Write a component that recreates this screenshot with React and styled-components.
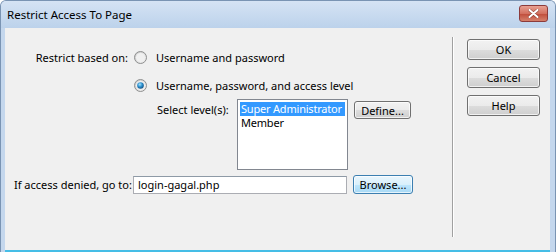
import React from 'react';
import styled, { createGlobalStyle } from 'styled-components';

const GlobalStyle = createGlobalStyle`
  html, body { margin: 0; padding: 0; background: #ffffff; }
  body { font-family: "Noto Sans", "Open Sans", sans-serif; font-size: 11px; color: #000; }
`;

const Window = styled.div`
  width: 556px;
  height: 252px;
  box-sizing: border-box;
  display: flex;
  flex-direction: column;
  background: #c4d7ed;
  border-radius: 6px 6px 0 0;
  border: 1px solid #7a94b3;
  border-bottom: none;
  overflow: hidden;
`;

const TitleBar = styled.div`
  height: 27px;
  flex: none;
  display: flex;
  align-items: center;
  justify-content: space-between;
  padding: 0 7px 0 6px;
  background: linear-gradient(#d5e3f4, #bcd2eb);
`;

const Title = styled.span`
  font-size: 11.5px;
  color: #000;
`;

const CloseButton = styled.div`
  width: 27px;
  height: 15px;
  margin-top: -3px;
  border: 1px solid #8c3b3b;
  border-radius: 3px;
  display: flex;
  align-items: center;
  justify-content: center;
  background: linear-gradient(#e8a193, #d3705f 50%, #c04c3a 51%, #d5806b);
`;

const Body = styled.div`
  flex: 1;
  display: flex;
  margin: 0 5px 0 4px;
  background: #f0f0f0;
  border-bottom: 2px solid #45bde6;
`;

const Main = styled.div`
  width: 447px;
  padding: 15px 0 0 9px;
  box-sizing: border-box;
  display: grid;
  grid-template-columns: 119px 1fr;
  grid-auto-rows: min-content;
`;

const Label = styled.div`
  text-align: right;
  padding-right: 5px;
  align-self: center;
  white-space: nowrap;
`;

const Option = styled.label`
  display: flex;
  align-items: center;
  gap: 9px;
  height: 28px;
  padding-left: 1px;
  white-space: nowrap;
`;

const LevelRow = styled.div`
  display: flex;
  align-items: flex-start;
  padding-left: 24px;
  height: 76px;
`;

const LevelLabel = styled.span`
  margin-top: 3px;
  width: 80px;
  white-space: nowrap;
`;

const ListBox = styled.div`
  width: 111px;
  height: 71px;
  box-sizing: border-box;
  border: 1px solid #828790;
  background: #fff;
  padding: 2px;
  white-space: nowrap;
  overflow: hidden;
  letter-spacing: -0.2px;
`;

const ListItem = styled.div`
  height: 14px;
  line-height: 14px;
  padding-left: 1px;
  background: ${p => (p.$selected ? '#3399ff' : 'transparent')};
  color: ${p => (p.$selected ? '#fff' : '#000')};
`;

const Button = styled.button`
  font: inherit;
  font-size: 11px;
  width: ${p => p.$w || 73}px;
  height: ${p => p.$h || 21}px;
  margin-top: ${p => p.$top || 0}px;
  margin-left: ${p => p.$left || 0}px;
  padding: 0;
  border: 1px solid ${p => (p.$focus ? '#3c7fb1' : '#707070')};
  border-radius: 3px;
  color: #000;
  background: ${p =>
    p.$focus
      ? 'linear-gradient(#eaf6fd, #d9f0fc 50%, #bee6fd 51%, #a7d9f5)'
      : 'linear-gradient(#f2f2f2, #ebebeb 50%, #dddddd 51%, #cfcfcf)'};
  box-shadow: inset 0 0 0 1px rgba(255, 255, 255, 0.7);
`;

const DeniedRow = styled.div`
  grid-column: 1 / 3;
  display: grid;
  grid-template-columns: 119px 214px auto;
  align-items: center;
`;

const DeniedLabel = styled.div`
  white-space: nowrap;
`;

const TextInput = styled.div`
  height: 18px;
  box-sizing: border-box;
  border: 1px solid #abadb3;
  border-top-color: #8e9aa6;
  background: #fff;
  padding-left: 4px;
  line-height: 16px;
`;

const Side = styled.div`
  flex: 1;
  margin: 9px 0 13px;
  border-left: 1px solid #a0a0a0;
  box-shadow: inset 1px 0 0 #ffffff;
  padding: 2px 0 0 14px;
  display: flex;
  flex-direction: column;
  gap: 7px;
`;

const Radio = ({ checked }) => (
  <svg width="13" height="13" viewBox="0 0 13 13">
    <defs>
      <linearGradient id={checked ? 'rg1' : 'rg0'} x1="0" y1="0" x2="1" y2="1">
        <stop offset="0" stopColor="#c8c8c8" />
        <stop offset="1" stopColor="#f4f4f4" />
      </linearGradient>
      <radialGradient id="dot" cx="0.4" cy="0.35" r="0.7">
        <stop offset="0" stopColor="#a9e4fb" />
        <stop offset="0.5" stopColor="#2a8fcf" />
        <stop offset="1" stopColor="#154c7a" />
      </radialGradient>
    </defs>
    <circle cx="6.5" cy="6.5" r="6" fill={`url(#${checked ? 'rg1' : 'rg0'})`} stroke="#8e8f8f" strokeWidth="1" />
    <circle cx="6.5" cy="6.5" r="4.5" fill="#f0f0f0" />
    {checked && <circle cx="6.5" cy="6.5" r="3.3" fill="url(#dot)" />}
  </svg>
);

const CloseIcon = () => (
  <svg width="11" height="9" viewBox="0 0 11 9">
    <path d="M1.5 1 L9.5 8 M9.5 1 L1.5 8" stroke="#5a1d16" strokeWidth="3.2" strokeLinecap="round" opacity="0.5" />
    <path d="M1.5 1 L9.5 8 M9.5 1 L1.5 8" stroke="#ffffff" strokeWidth="2" strokeLinecap="round" />
  </svg>
);

export default function App() {
  return (
    <>
      <GlobalStyle />
      <Window>
        <TitleBar>
          <Title>Restrict Access To Page</Title>
          <CloseButton><CloseIcon /></CloseButton>
        </TitleBar>
        <Body>
          <Main>
            <Label>Restrict based on:</Label>
            <Option><Radio /> Username and password</Option>
            <div />
            <Option><Radio checked /> Username, password, and access level</Option>
            <div />
            <LevelRow>
              <LevelLabel>Select level(s):</LevelLabel>
              <ListBox>
                <ListItem $selected>Super Administrator</ListItem>
                <ListItem>Member</ListItem>
              </ListBox>
              <Button $w={57} $h={18} $top={2} $left={6}>Define...</Button>
            </LevelRow>
            <DeniedRow>
              <DeniedLabel>If access denied, go to:</DeniedLabel>
              <TextInput>login-gagal.php</TextInput>
              <Button $w={60} $h={19} $left={6} $focus>Browse...</Button>
            </DeniedRow>
          </Main>
          <Side>
            <Button>OK</Button>
            <Button>Cancel</Button>
            <Button>Help</Button>
          </Side>
        </Body>
      </Window>
    </>
  );
}
